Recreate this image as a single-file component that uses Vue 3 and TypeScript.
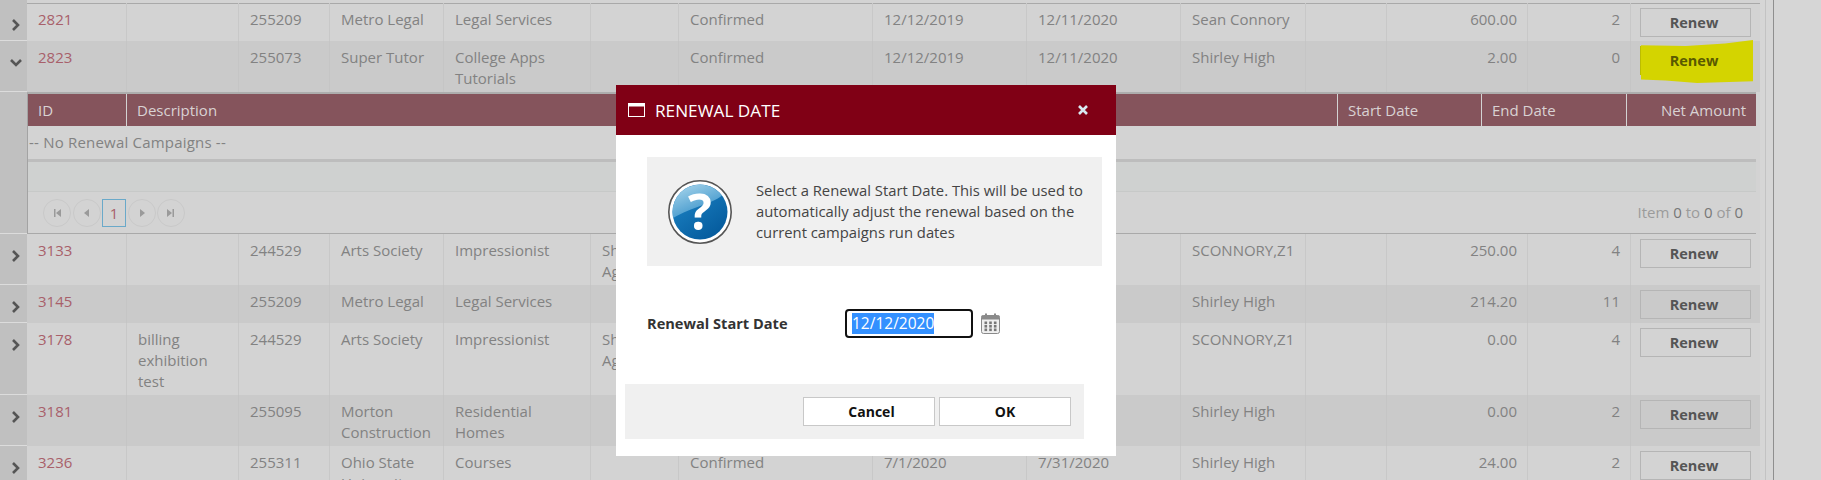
<template>
  <div class="page">
    <table class="grid">
      <colgroup>
        <col v-for="(w, i) in colWidths" :key="i" :style="{ width: w + 'px' }" />
      </colgroup>
      <tbody>
        <tr class="cap">
          <td class="gutter"></td>
          <td :colspan="14"></td>
        </tr>
        <template v-for="(row, i) in rows" :key="row.id">
          <tr :class="['row', { alt: i % 2 === 1, first: i === 0 }]">
            <td class="gutter">
              <svg class="chevron" width="14" height="12" viewBox="0 0 14 12">
                <polyline v-if="row.open" points="2,3 7,8 12,3" />
                <polyline v-else points="4,1 9,6 4,11" />
              </svg>
            </td>
            <td><a class="link">{{ row.id }}</a></td>
            <td>{{ row.desc }}</td>
            <td>{{ row.account }}</td>
            <td>{{ row.client }}</td>
            <td class="campaign">{{ row.campaign }}</td>
            <td>{{ row.agency }}</td>
            <td>{{ row.status }}</td>
            <td>{{ row.start }}</td>
            <td>{{ row.end }}</td>
            <td>{{ row.owner }}</td>
            <td></td>
            <td class="num">{{ row.amount }}</td>
            <td class="num">{{ row.count }}</td>
            <td class="action">
              <button :class="['renew', { marked: row.open }]">Renew</button>
            </td>
          </tr>
          <tr v-if="row.open" class="detail-row">
            <td class="gutter"></td>
            <td :colspan="14" class="detail-cell">
              <div class="detail">
                <div class="detail-head">
                  <span>ID</span>
                  <span>Description</span>
                  <span>Start Date</span>
                  <span>End Date</span>
                  <span class="right">Net Amount</span>
                </div>
                <div class="detail-empty">-- No Renewal Campaigns --</div>
                <div class="detail-foot"></div>
                <div class="pager">
                  <div class="pager-btns">
                    <span class="round">
                      <svg width="10" height="10" viewBox="0 0 10 10"><path d="M2 1h1.5v8H2zM9 1v8L4 5z" /></svg>
                    </span>
                    <span class="round">
                      <svg width="10" height="10" viewBox="0 0 10 10"><path d="M7 1v8L2 5z" /></svg>
                    </span>
                    <span class="current">1</span>
                    <span class="round">
                      <svg width="10" height="10" viewBox="0 0 10 10"><path d="M3 1v8l5-4z" /></svg>
                    </span>
                    <span class="round">
                      <svg width="10" height="10" viewBox="0 0 10 10"><path d="M1 1v8l5-4zM6.5 1H8v8H6.5z" /></svg>
                    </span>
                  </div>
                  <div class="pager-info">Item <b>0</b> to <b>0</b> of <b>0</b></div>
                </div>
              </div>
            </td>
          </tr>
        </template>
      </tbody>
    </table>

    <div class="modal">
      <div class="modal-head">
        <svg width="17" height="14" viewBox="0 0 17 14" class="win-icon">
          <rect x="0.5" y="0.5" width="16" height="13" fill="none" stroke="#fff" />
          <rect x="0.5" y="0.5" width="16" height="3" fill="#fff" />
        </svg>
        <span class="modal-title">RENEWAL DATE</span>
        <svg width="12" height="12" viewBox="0 0 12 12" class="close">
          <path d="M2 2l8 8M10 2l-8 8" />
        </svg>
      </div>
      <div class="info">
        <svg class="help" width="64" height="64" viewBox="0 0 64 64">
          <defs>
            <linearGradient id="helpBlue" x1="0.2" y1="0.2" x2="0.8" y2="1">
              <stop offset="0" stop-color="#1a7fc0" />
              <stop offset="1" stop-color="#04599b" />
            </linearGradient>
            <linearGradient id="helpGloss" x1="0.1" y1="0" x2="0.7" y2="1">
              <stop offset="0" stop-color="#a9d6ec" />
              <stop offset="1" stop-color="#2f8cc6" />
            </linearGradient>
          </defs>
          <circle cx="32" cy="32" r="31.2" fill="#fff" stroke="#555" stroke-width="1.6" />
          <circle cx="32" cy="32" r="27.5" fill="url(#helpBlue)" />
          <path d="M5.2 38A27.5 27.5 0 0 1 54 15.5C44 24 24 27 5.2 38z" fill="url(#helpGloss)" />
          <text x="32" y="50" text-anchor="middle" class="help-mark">?</text>
        </svg>
        <p class="info-text">
          Select a Renewal Start Date. This will be used to automatically adjust the renewal based on the
          current campaigns run dates
        </p>
      </div>
      <div class="form-row">
        <label class="form-label">Renewal Start Date</label>
        <div class="date-box"><span class="selected">12/12/2020</span></div>
        <svg class="cal" width="19" height="21" viewBox="0 0 19 21">
          <rect x="0.5" y="2.5" width="18" height="18" rx="2" fill="#efefef" stroke="#8a8a8a" />
          <rect x="0.5" y="2.5" width="18" height="4" fill="#8a8a8a" />
          <rect x="4" y="0.5" width="2" height="4" fill="#8a8a8a" />
          <rect x="13" y="0.5" width="2" height="4" fill="#8a8a8a" />
          <g fill="#777">
            <rect v-for="c in calCells" :key="c.x + '-' + c.y" :x="c.x" :y="c.y" width="2.6" height="2.6" />
          </g>
        </svg>
      </div>
      <div class="modal-foot">
        <button class="foot-btn cancel">Cancel</button>
        <button class="foot-btn">OK</button>
      </div>
    </div>
  </div>
</template>

<script setup lang="ts">
interface Row {
  id: number;
  desc?: string;
  account: number;
  client: string;
  campaign: string;
  agency?: string;
  status?: string;
  start?: string;
  end?: string;
  owner: string;
  amount: string;
  count: number;
  open?: boolean;
}

const colWidths = [27, 99, 112, 91, 114, 147, 88, 194, 154, 154, 125, 81, 141, 103, 130];

const rows: Row[] = [
  { id: 2821, account: 255209, client: "Metro Legal", campaign: "Legal Services", status: "Confirmed", start: "12/12/2019", end: "12/11/2020", owner: "Sean Connory", amount: "600.00", count: 2 },
  { id: 2823, account: 255073, client: "Super Tutor", campaign: "College Apps Tutorials", status: "Confirmed", start: "12/12/2019", end: "12/11/2020", owner: "Shirley High", amount: "2.00", count: 0, open: true },
  { id: 3133, account: 244529, client: "Arts Society", campaign: "Impressionist", agency: "Shirley Agency", owner: "SCONNORY,Z1", amount: "250.00", count: 4 },
  { id: 3145, account: 255209, client: "Metro Legal", campaign: "Legal Services", owner: "Shirley High", amount: "214.20", count: 11 },
  { id: 3178, desc: "billing exhibition test", account: 244529, client: "Arts Society", campaign: "Impressionist", agency: "Shirley Agency", owner: "SCONNORY,Z1", amount: "0.00", count: 4 },
  { id: 3181, account: 255095, client: "Morton Construction", campaign: "Residential Homes", owner: "Shirley High", amount: "0.00", count: 2 },
  { id: 3236, account: 255311, client: "Ohio State University", campaign: "Courses", status: "Confirmed", start: "7/1/2020", end: "7/31/2020", owner: "Shirley High", amount: "24.00", count: 2 },
];

// calendar icon dots
const calCells: { x: number; y: number }[] = [];
for (const y of [8.5, 12, 15.5]) {
  for (const x of [3.5, 8.2, 12.9]) {
    calCells.push({ x, y });
  }
}
</script>

<style>
html,
body {
  margin: 0;
  height: 480px;
  overflow: hidden;
  background: #d6d6d6;
}
</style>

<style scoped>
.page {
  position: relative;
  width: 1821px;
  height: 480px;
  overflow: hidden;
  font-family: "Open Sans", "Noto Sans", sans-serif;
  font-size: 15px;
  line-height: 21px;
  color: #828282;
  background: #d6d6d6;
}

.page::after {
  content: "";
  position: absolute;
  top: 0;
  bottom: 0;
  left: 1765px;
  width: 7px;
  border-left: 1px solid #c3c3c3;
  border-right: 1px solid #8f8f8f;
}

.grid {
  table-layout: fixed;
  width: 1760px;
  border-collapse: separate;
  border-spacing: 0;
}

.grid td {
  padding: 6px 10px 3px 11px;
  vertical-align: top;
  border-left: 1px solid #c8c8c8;
  box-sizing: border-box;
}

.row td {
  background: #d3d3d3;
}

.row.alt td {
  background: #cacaca;
  border-left-color: #c5c5c5;
}

.row.first td:not(.gutter) {
  box-shadow: inset 0 1px #a9a9a9;
}

.grid td.gutter {
  padding: 16px 0 0 9px;
  background: #c0c0c0;
  border-left: 0;
  border-bottom: 1px solid #dcdcdc;
}

.grid .cap td,
.grid .cap td.gutter {
  height: 3px;
  padding: 0;
  border: 0;
  line-height: 0;
}

.grid .cap td {
  background: #d3d3d3;
}

.grid .cap td.gutter {
  background: #c0c0c0;
}

.grid .row td:nth-child(2) {
  border-left: 0;
}

.grid td.campaign {
  padding-right: 24px;
}

.chevron {
  display: block;
}

.chevron polyline {
  fill: none;
  stroke: #555;
  stroke-width: 2.6;
}

.link {
  color: #a8606a;
}

.grid td.num {
  text-align: right;
}

.grid td.action {
  padding: 5px 9px 4px 9px;
}

.renew {
  position: relative;
  z-index: 0;
  display: block;
  width: 111px;
  height: 29px;
  padding: 0 3px 0 0;
  font: 700 14.5px "Open Sans", "Noto Sans", sans-serif;
  color: #555;
  background: transparent;
  border: 1px solid #b5b5b5;
}

.renew.marked {
  color: #5a5a00;
  border-color: #bcbc00;
}

.renew.marked::before {
  content: "";
  position: absolute;
  z-index: -1;
  top: -7px;
  left: 0;
  width: 112px;
  height: 43px;
  background: #d4d400;
  clip-path: polygon(0 12%, 40% 14%, 75% 8%, 100% 0, 100% 96%, 50% 100%, 22% 94%, 0 92%);
}

.grid td.detail-cell {
  padding: 0;
  border-left: 0;
  background: #d3d3d3;
}

.detail {
  width: 1729px;
  height: 142px;
  box-sizing: border-box;
  border-left: 1px solid #a3a3a3;
  border-bottom: 1px solid #a9a9a9;
  display: flex;
  flex-direction: column;
  border-top: 2px solid #adadad;
}

.detail-head {
  display: grid;
  grid-template-columns: 98px 1fr 144px 145px 130px;
  height: 32px;
  line-height: 32px;
  color: #d9d2d3;
  background: #85545c;
}

.detail-head span {
  padding: 0 10px 0 10px;
  border-left: 1px solid #d3d3d3;
}

.detail-head span:first-child {
  border-left: 0;
}

.detail-head .right {
  text-align: right;
}

.detail-empty {
  box-sizing: border-box;
  height: 36px;
  line-height: 32px;
  padding-left: 1px;
  letter-spacing: 0.2px;
  border-bottom: 3px solid #bdbdbd;
}

.detail-foot {
  height: 30px;
  background: #cfd1d0;
  border-bottom: 1px solid #c7c9c8;
  box-sizing: border-box;
}

.pager {
  flex: 1;
  display: flex;
  align-items: center;
  justify-content: space-between;
  padding: 0 13px 0 15px;
}

.pager-btns {
  display: flex;
  align-items: center;
  gap: 1.5px;
}

.round {
  width: 28px;
  height: 28px;
  box-sizing: border-box;
  display: flex;
  align-items: center;
  justify-content: center;
  border: 1px solid #c9c9c9;
  border-radius: 50%;
}

.round svg {
  fill: #9a9a9a;
}

.current {
  width: 24px;
  height: 28px;
  box-sizing: border-box;
  text-align: center;
  line-height: 26px;
  color: #a8606a;
  border: 1px solid #6aa9c9;
}

.pager-info {
  color: #9b9b9b;
}

.pager-info b {
  font-weight: 400;
  color: #777;
}

.modal {
  position: absolute;
  top: 85px;
  left: 616px;
  width: 500px;
  height: 371px;
  background: #fff;
}

.modal-head {
  display: flex;
  align-items: center;
  height: 50px;
  padding: 0 27px 0 12px;
  color: #fff;
  background: #800015;
}

.win-icon {
  margin-right: 10px;
}

.modal-title {
  flex: 1;
  font-size: 17.2px;
}

.close path {
  fill: none;
  stroke: #d8e9f1;
  stroke-width: 2.6;
}

.info {
  display: flex;
  align-items: center;
  width: 455px;
  height: 109px;
  margin: 22px 0 0 31px;
  box-sizing: border-box;
  padding-left: 21px;
  background: #f0f0f0;
}

.help {
  flex: none;
  margin-right: 24px;
}

.help-mark {
  font: 700 50px "Open Sans", sans-serif;
  fill: #fff;
}

.info-text {
  margin: 0;
  font-size: 14.8px;
  color: #444;
}

.form-row {
  display: flex;
  align-items: center;
  height: 29px;
  margin: 43px 0 0 31px;
}

.form-label {
  width: 198px;
  font-size: 14.6px;
  font-weight: 700;
  color: #333;
}

.date-box {
  box-sizing: border-box;
  width: 128px;
  height: 29px;
  padding: 2px 0 0 5px;
  border: 2px solid #111;
  border-radius: 4px;
}

.selected {
  display: inline-block;
  height: 21px;
  line-height: 21px;
  font-size: 15.5px;
  color: #fff;
  background: #3390ff;
}

.cal {
  margin-left: 8px;
}

.modal-foot {
  display: flex;
  justify-content: flex-end;
  gap: 4px;
  box-sizing: border-box;
  width: 459px;
  height: 55px;
  margin: 46px 0 0 9px;
  padding: 13px 13px 0 0;
  background: #f0f0f0;
}

.foot-btn {
  width: 132px;
  height: 29px;
  padding: 0;
  font: 700 14px "Open Sans", "Noto Sans", sans-serif;
  color: #111;
  background: #fff;
  border: 1px solid #c8c8c8;
}

.foot-btn.cancel {
  padding-left: 5px;
}
</style>
